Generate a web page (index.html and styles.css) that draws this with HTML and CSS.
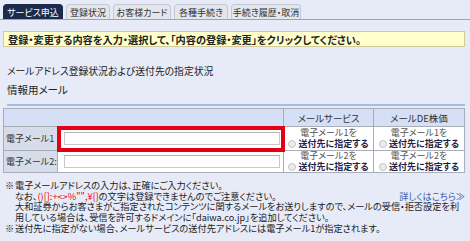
FILE: index.html
```html
<!DOCTYPE html>
<html lang="ja">

<head>
    <meta charset="UTF-8">
    <meta name="viewport" content="width=device-width, initial-scale=1.0">
    <title>メールアドレス登録</title>
    <link rel="stylesheet" href="styles.css">
</head>

<body>
    <div class="page">
        <ul class="tabs">
            <li class="tab tab-active">サービス申込</li>
            <li class="tab tab-status">登録状況</li>
            <li class="tab tab-card">お客様カード</li>
            <li class="tab tab-proc">各種手続き</li>
            <li class="tab tab-history">手続き履歴・取消</li>
        </ul>

        <div class="notice">登録・変更する内容を入力・選択して、「内容の登録・変更」をクリックしてください。</div>

        <h2 class="section-title">メールアドレス登録状況および送付先の指定状況</h2>
        <h3 class="sub-title">情報用メール</h3>

        <table class="mail-table">
            <colgroup>
                <col class="col-label">
                <col class="col-input">
                <col class="col-service">
                <col class="col-stock">
            </colgroup>
            <thead>
                <tr>
                    <th colspan="2"></th>
                    <th>メールサービス</th>
                    <th>メールDE株価</th>
                </tr>
            </thead>
            <tbody>
                <tr class="row-first">
                    <td class="label">電子メール1</td>
                    <td class="input-cell highlight"><input type="text" class="mail-input"></td>
                    <td class="radio-cell">
                        <span class="radio-top">電子メール1を</span>
                        <label class="radio-bottom"><span class="radio"></span>送付先に指定する</label>
                    </td>
                    <td class="radio-cell">
                        <span class="radio-top">電子メール1を</span>
                        <label class="radio-bottom"><span class="radio"></span>送付先に指定する</label>
                    </td>
                </tr>
                <tr>
                    <td class="label">電子メール2:</td>
                    <td class="input-cell"><input type="text" class="mail-input"></td>
                    <td class="radio-cell">
                        <span class="radio-top">電子メール2を</span>
                        <label class="radio-bottom"><span class="radio"></span>送付先に指定する</label>
                    </td>
                    <td class="radio-cell">
                        <span class="radio-top">電子メール2を</span>
                        <label class="radio-bottom"><span class="radio"></span>送付先に指定する</label>
                    </td>
                </tr>
            </tbody>
        </table>

        <div class="notes">
            <div class="note">
                <span class="mark">※</span>
                <div class="note-body">
                    <p>電子メールアドレスの入力は、正確にご入力ください。</p>
                    <p class="note-line">
                        <span>なお、<span class="ng-chars">()[]:+&lt;&gt;%"",¥{}</span>の文字は登録できませんのでご注意ください。</span>
                        <a href="#" class="more-link">詳しくはこちら≫</a>
                    </p>
                    <p class="note-wrap">大和証券からお客さまがご指定されたコンテンツに関するメールをお送りしますので、メールの受信・拒否設定を利用している場合は、受信を許可するドメインに「daiwa.co.jp」を追加してください。</p>
                </div>
            </div>
            <div class="note">
                <span class="mark">※</span>
                <div class="note-body">
                    <p>送付先に指定がない場合、メールサービスの送付先アドレスには電子メール1が指定されます。</p>
                </div>
            </div>
        </div>
    </div>
</body>

</html>
```

FILE: styles.css
```css
body {
    margin: 0;
    background-color: #e7ebf8;
    color: #222;
    font-family: "Noto Sans CJK JP", sans-serif;
    font-feature-settings: "palt";
}

.page {
    padding: 4px 5px 0 3px;
}

/* タブ */
.tabs {
    list-style: none;
    margin: 0 -5px 0 -3px;
    padding: 0 0 0 3px;
    display: flex;
    gap: 3px;
    border-bottom: 1px solid #8ea6cc;
    height: 15px;
}

.tab {
    height: 15px;
    line-height: 15px;
    font-size: 9px;
    text-align: center;
    color: #333;
    background-color: #e4e6ec;
    border: 1px solid #c4c8d2;
    border-bottom: none;
    border-radius: 4px 4px 0 0;
    box-sizing: border-box;
}

.tab-active {
    background-color: #1c2a4c;
    border-color: #1c2a4c;
    color: #fff;
    width: 60px;
}

.tab-status {
    width: 44px;
}

.tab-card {
    width: 58px;
}

.tab-proc {
    width: 54px;
}

.tab-history {
    width: 70px;
}

/* お知らせ */
.notice {
    margin-top: 11px;
    height: 16px;
    line-height: 15px;
    box-sizing: border-box;
    padding-left: 4px;
    font-size: 10.2px;
    font-weight: bold;
    color: #222;
    background-color: #ffffcc;
    border: 1px solid #d4cc96;
}

.section-title {
    margin: 17px 0 0 4px;
    font-size: 9.8px;
    font-weight: normal;
    line-height: 14px;
}

.sub-title {
    margin: 5px 0 0 4px;
    font-size: 10.5px;
    font-weight: normal;
    line-height: 14px;
    padding-bottom: 7px;
    border-bottom: 2px solid #a4bcea;
}

/* テーブル */
.mail-table {
    margin-top: 2px;
    width: 462px;
    border-collapse: collapse;
    table-layout: fixed;
}

.col-label {
    width: 54px;
}

.col-service {
    width: 90px;
}

.col-stock {
    width: 91px;
}

.mail-table th,
.mail-table td {
    border: 1px solid #a8adb8;
    padding: 0;
}

.mail-table th {
    height: 17px;
    font-size: 9.5px;
    font-weight: normal;
    color: #333;
    background-color: #d5dff6;
}

.label {
    padding-left: 2px !important;
    font-size: 9px;
    color: #333;
    background-color: #d6dcea;
    white-space: nowrap;
}

.input-cell {
    background-color: #fff;
    padding: 0 3px 0 6px !important;
}

.highlight {
    outline: 4px solid #e20012;
    outline-offset: -3px;
}

.mail-input {
    display: block;
    width: 100%;
    height: 13px;
    box-sizing: border-box;
    border: 1px solid #c8c8c8;
    border-top-color: #b4b4b4;
    background-color: #fff;
    margin: 0;
    padding: 0;
}

.row-first td {
    height: 23px;
}

.radio-cell {
    height: 21px;
    background-color: #fff;
    text-align: center;
    font-size: 9px;
    line-height: 10.5px;
}

.radio-top {
    display: block;
    color: #555;
}

.radio-bottom {
    display: block;
    font-weight: bold;
    color: #1e2244;
    white-space: nowrap;
}

.radio {
    display: inline-block;
    width: 6px;
    height: 6px;
    margin-right: 2px;
    border: 1px solid #c4c4c4;
    border-radius: 50%;
    background-color: #ececec;
    vertical-align: -1px;
}

/* 注意書き */
.notes {
    margin-top: 7px;
    font-size: 9.2px;
    line-height: 10.7px;
    color: #222;
}

.note {
    display: flex;
}

.mark {
    width: 10px;
    padding-left: 2px;
    flex-shrink: 0;
}

.note-body {
    flex: 1;
}

.note-body p {
    margin: 0;
}

.note-line {
    display: flex;
    justify-content: space-between;
}

.note-wrap {
    padding-right: 2px;
}

.ng-chars {
    color: #e00;
}

.more-link {
    color: #3a5cb4;
    text-decoration: none;
}
```
